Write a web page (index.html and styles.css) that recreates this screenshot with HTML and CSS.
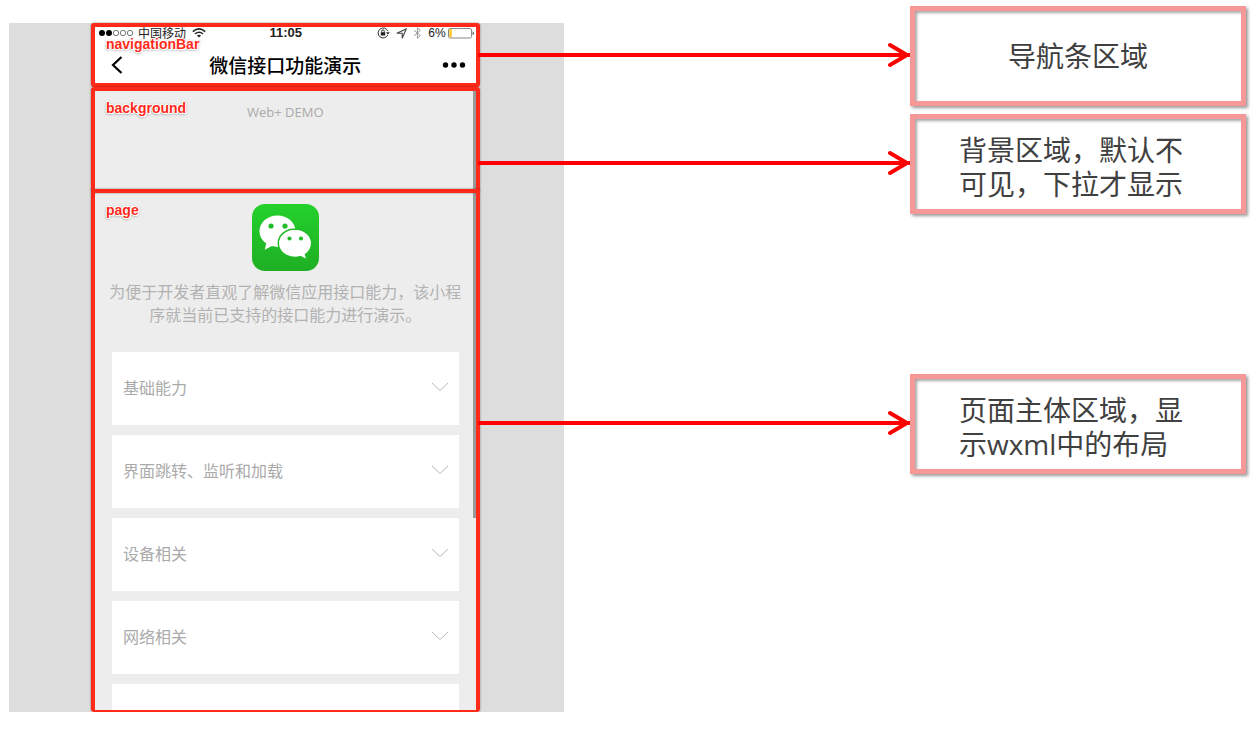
FILE: index.html
```html
<!DOCTYPE html>
<html lang="zh-CN">
<head>
    <meta charset="UTF-8">
    <meta name="viewport" content="width=device-width, initial-scale=1.0">
    <title>微信接口功能演示</title>
    <link rel="stylesheet" href="styles.css">
</head>
<body>
    <main class="diagram">
        <div class="stage">
            <div class="phone">
                <div class="scrollbar"></div>
                <header class="region nav-region">
                    <div class="status-bar">
                        <div class="status-left">
                            <svg class="signal" width="36" height="8" viewBox="0 0 36 8">
                                <circle cx="4" cy="4" r="3"/>
                                <circle cx="11" cy="4" r="3"/>
                                <g fill="none" stroke="#555" stroke-width=".8">
                                    <circle cx="18" cy="4" r="2.7"/>
                                    <circle cx="25" cy="4" r="2.7"/>
                                    <circle cx="32" cy="4" r="2.7"/>
                                </g>
                            </svg>
                            <span class="carrier">中国移动</span>
                            <svg width="14" height="10" viewBox="0 0 14 10" fill="none" stroke="#222" stroke-width="1.5">
                                <path d="M.8 3.6Q7-1.8 13.2 3.6M3 6Q7 2.6 11 6"/>
                                <path d="M7 9.6L4.9 7.6Q7 6 9.1 7.6Z" fill="#222" stroke="none"/>
                            </svg>
                        </div>
                        <span class="time">11:05</span>
                        <div class="status-right">
                            <svg width="13" height="12" viewBox="0 0 13 12" fill="none" stroke="#333">
                                <path d="M10.8 4.2A5 5 0 1 0 10.7 8"/>
                                <path d="M9 5.2h3.8L10.9 7.8Z" fill="#333" stroke="none"/>
                                <rect x="3.8" y="5.2" width="4.4" height="3.3" fill="#222" stroke="none"/>
                                <path d="M4.7 5.4V4.2a1.3 1.3 0 0 1 2.6 0v1.2"/>
                            </svg>
                            <svg width="11" height="11" viewBox="0 0 11 11">
                                <path d="M.8 5.2L10.2 1 6.2 10.2V5.2Z" fill="none" stroke="#444" stroke-width="1.1"/>
                            </svg>
                            <svg width="9" height="12" viewBox="0 0 9 12">
                                <path d="M1 3.2L7.4 8.6 4.4 11.3V.8L7.4 3.4 1 8.8" fill="none" stroke="#999"/>
                            </svg>
                            <span class="percent">6%</span>
                            <svg width="26" height="11" viewBox="0 0 26 11">
                                <rect x=".5" y=".5" width="23" height="9.5" rx="1.5" fill="#fff" stroke="#888"/>
                                <rect x="1.2" y="1.2" width="2.6" height="8" fill="#fdc82f"/>
                                <path d="M24.6 3.2q1.4.4 1.4 2t-1.4 2z" fill="#555"/>
                            </svg>
                        </div>
                    </div>
                    <span class="tag">navigationBar</span>
                    <div class="title-bar">
                        <button class="icon-button" aria-label="返回">
                            <svg width="12" height="18" viewBox="0 0 12 18">
                                <path d="M10.5 1L2 9l8.5 8" fill="none" stroke="#000" stroke-width="2.2"/>
                            </svg>
                        </button>
                        <h1>微信接口功能演示</h1>
                        <button class="icon-button more" aria-label="更多">
                            <svg width="24" height="6" viewBox="0 0 24 6">
                                <circle cx="3.5" cy="3" r="2.7"/>
                                <circle cx="12" cy="3" r="2.7"/>
                                <circle cx="20.5" cy="3" r="2.7"/>
                            </svg>
                        </button>
                    </div>
                </header>

                <section class="region bg-region">
                    <span class="tag">background</span>
                    <p>Web+ DEMO</p>
                </section>

                <section class="region page-region">
                    <span class="tag">page</span>
                    <svg class="logo" width="67" height="67" viewBox="0 0 67 67">
                        <defs>
                            <linearGradient id="green" x1="0" y1="0" x2="0" y2="1">
                                <stop offset="0" stop-color="#24d12c"/>
                                <stop offset="1" stop-color="#1fae24"/>
                            </linearGradient>
                        </defs>
                        <rect width="67" height="67" rx="13" fill="url(#green)"/>
                        <path d="M25.5 11.5C15.500 11.500 7.500 18.500 7.500 27.200c0 5 2.600 9.300 6.700 12.100L12.800 45.800l7-3.700c1.800.5 3.700.8 5.700.8 10 0 18-7 18-15.700S35.500 11.500 25.500 11.500Z" fill="#fff"/>
                        <path d="M43 25c-9.300 0-16.700 6.300-16.700 14.200S33.700 53.400 43 53.400c1.900 0 3.700-.3 5.400-.8l6.600 3.200-1.500-5.400c3.800-2.600 6.200-6.600 6.200-11.200C59.700 31.300 52.300 25 43 25Z" fill="#fff" stroke="#20bb27" stroke-width="1.5"/>
                        <g fill="#20bd28">
                            <circle cx="19" cy="22" r="2.6"/>
                            <circle cx="33" cy="22" r="2.6"/>
                            <circle cx="37.5" cy="34.5" r="2.1"/>
                            <circle cx="49" cy="34.5" r="2.1"/>
                        </g>
                    </svg>
                    <p class="intro">为便于开发者直观了解微信应用接口能力，该小程<br>序就当前已支持的接口能力进行演示。</p>
                    <div class="menu">
                        <button class="menu-item">基础能力
                            <svg width="18" height="10" viewBox="0 0 18 10"><path d="M1 1l8 7.500L17 1"/></svg>
                        </button>
                        <button class="menu-item">界面跳转、监听和加载
                            <svg width="18" height="10" viewBox="0 0 18 10"><path d="M1 1l8 7.500L17 1"/></svg>
                        </button>
                        <button class="menu-item">设备相关
                            <svg width="18" height="10" viewBox="0 0 18 10"><path d="M1 1l8 7.500L17 1"/></svg>
                        </button>
                        <button class="menu-item">网络相关
                            <svg width="18" height="10" viewBox="0 0 18 10"><path d="M1 1l8 7.500L17 1"/></svg>
                        </button>
                        <div class="menu-peek"></div>
                    </div>
                </section>
            </div>
        </div>

        <div class="notes">
            <div class="note">
                <div class="arrow">
                    <svg width="24" height="28" viewBox="0 0 24 28"><path d="M4 4l17 10L4 24"/></svg>
                </div>
                <p class="callout">导航条区域</p>
            </div>
            <div class="note">
                <div class="arrow">
                    <svg width="24" height="28" viewBox="0 0 24 28"><path d="M4 4l17 10L4 24"/></svg>
                </div>
                <p class="callout callout-long">背景区域，默认不<br>可见，下拉才显示</p>
            </div>
            <div class="note note-page">
                <div class="arrow">
                    <svg width="24" height="28" viewBox="0 0 24 28"><path d="M4 4l17 10L4 24"/></svg>
                </div>
                <p class="callout callout-long">页面主体区域，显<br>示wxml中的布局</p>
            </div>
        </div>
    </main>
</body>
</html>
```
FILE: styles.css
```css
* {
    box-sizing: border-box;
}
body {
    margin: 0;
    background: #fff;
    font-family: "Noto Sans CJK SC", sans-serif;
}
h1, p {
    margin: 0;
}
svg {
    display: block;
    flex: none;
}
button {
    border: none;
    padding: 0;
    font-family: inherit;
    cursor: pointer;
}
.diagram {
    display: grid;
    grid-template-columns: calc(45% - 2px) 1fr;
    align-items: start;
    padding: 0 13px 0 9px;
}

/* phone mock-up */
.stage {
    margin-top: 23px;
    padding: 0 84px 0 82px;
    background: #ddd;
}
.phone {
    position: relative;
    background: #ededed;
}
.region {
    position: relative;
    border: 4px solid #ff2a1a;
    border-radius: 3px;
    box-shadow: 0 0 2px rgba(0,0,0,0.5);
}
.tag {
    position: absolute;
    top: 9px;
    left: 11px;
    font: bold 14px/16px "Liberation Sans", sans-serif;
    color: #ff2a1a;
    text-shadow: 1px 0 #fff, -1px 0 #fff, 0 1px #fff, 0 -1px #fff, 1px 1px #fff, -1px -1px #fff, 0 0 2px #777, 0 1px 3px #777;
}
.nav-region {
    background: #fff;
}
.status-bar {
    display: grid;
    grid-template-columns: 1fr auto 1fr;
    align-items: center;
    height: 12px;
    padding: 0 2px 0 3px;
    font-size: 12px;
    line-height: 12px;
    color: #222;
}
.status-left, .status-right {
    display: flex;
    align-items: center;
}
.status-left {
    gap: 6px;
}
.signal {
    margin-right: -2px;
}
.status-right {
    justify-content: flex-end;
    gap: 6px;
}
.percent {
    margin-right: -4px;
    font-family: "Liberation Sans", sans-serif;
}
.time {
    font: bold 13px/12px "Liberation Sans", sans-serif;
}
.title-bar {
    display: grid;
    grid-template-columns: 1fr auto 1fr;
    align-items: center;
    height: 36px;
    margin-top: 8px;
    padding: 0 10px 0 16px;
    margin-right: 0;
}
.title-bar h1 {
    margin: 0 3px 0 -3px;
    font-size: 19px;
    line-height: 28px;
    font-weight: 500;
}
.icon-button {
    display: flex;
    width: 24px;
    background: none;
}
.more {
    justify-self: end;
}
.bg-region {
    height: 106px;
    padding-top: 11px;
    text-align: center;
    color: #aaa;
    font: 13px/20px "Open Sans", sans-serif;
}
.page-region {
    display: flex;
    flex-direction: column;
    align-items: center;
    margin-top: -4px;
    padding: 11px 17px 0;
    border-bottom-width: 2px;
}
.intro {
    margin-top: 9px;
    font-size: 16px;
    line-height: 23px;
    color: #b2b2b2;
    text-align: center;
    white-space: nowrap;
}
.menu {
    display: flex;
    flex-direction: column;
    gap: 10px;
    width: 100%;
    margin-top: 26px;
}
.menu-item {
    display: flex;
    justify-content: space-between;
    align-items: center;
    height: 73px;
    padding: 0 10px 3px 11px;
    background: #fff;
    font-size: 16px;
    color: #aaa;
}
.menu-item svg {
    fill: none;
    stroke: #b8b8b8;
}
.menu-peek {
    height: 26px;
    background: #fff;
}
.scrollbar {
    position: absolute;
    top: 67px;
    right: 3px;
    width: 4px;
    height: 428px;
    background: #999;
}

/* arrows and callouts */
.notes {
    position: relative;
    display: flex;
    flex-direction: column;
    gap: 8px;
    margin: 6px 0 0 -86px;
}
.note {
    display: flex;
    align-items: center;
}
.note-page {
    margin-top: 152px;
}
.arrow {
    display: flex;
    align-items: center;
    flex: 1;
    height: 28px;
    margin-bottom: 3px;
}
.arrow::before {
    content: "";
    flex: 1;
    height: 4px;
    margin-right: -4px;
    background: #f00;
}
.arrow svg {
    margin-left: -20px;
    fill: none;
    stroke: #f00;
    stroke-width: 4;
    stroke-linecap: round;
}
.callout {
    display: flex;
    align-items: center;
    justify-content: center;
    width: 336px;
    height: 100px;
    border: 5px solid #f59897;
    box-shadow: 2px 2px 3px rgba(0,0,0,0.4), inset 2px 2px 3px rgba(0,0,0,0.35);
    font-family: "Open Sans", "Noto Sans CJK SC", sans-serif;
    font-size: 28px;
    line-height: 34px;
    color: #404040;
}
.callout-long {
    justify-content: flex-start;
    padding: 6px 0 0 44px;
}
```
